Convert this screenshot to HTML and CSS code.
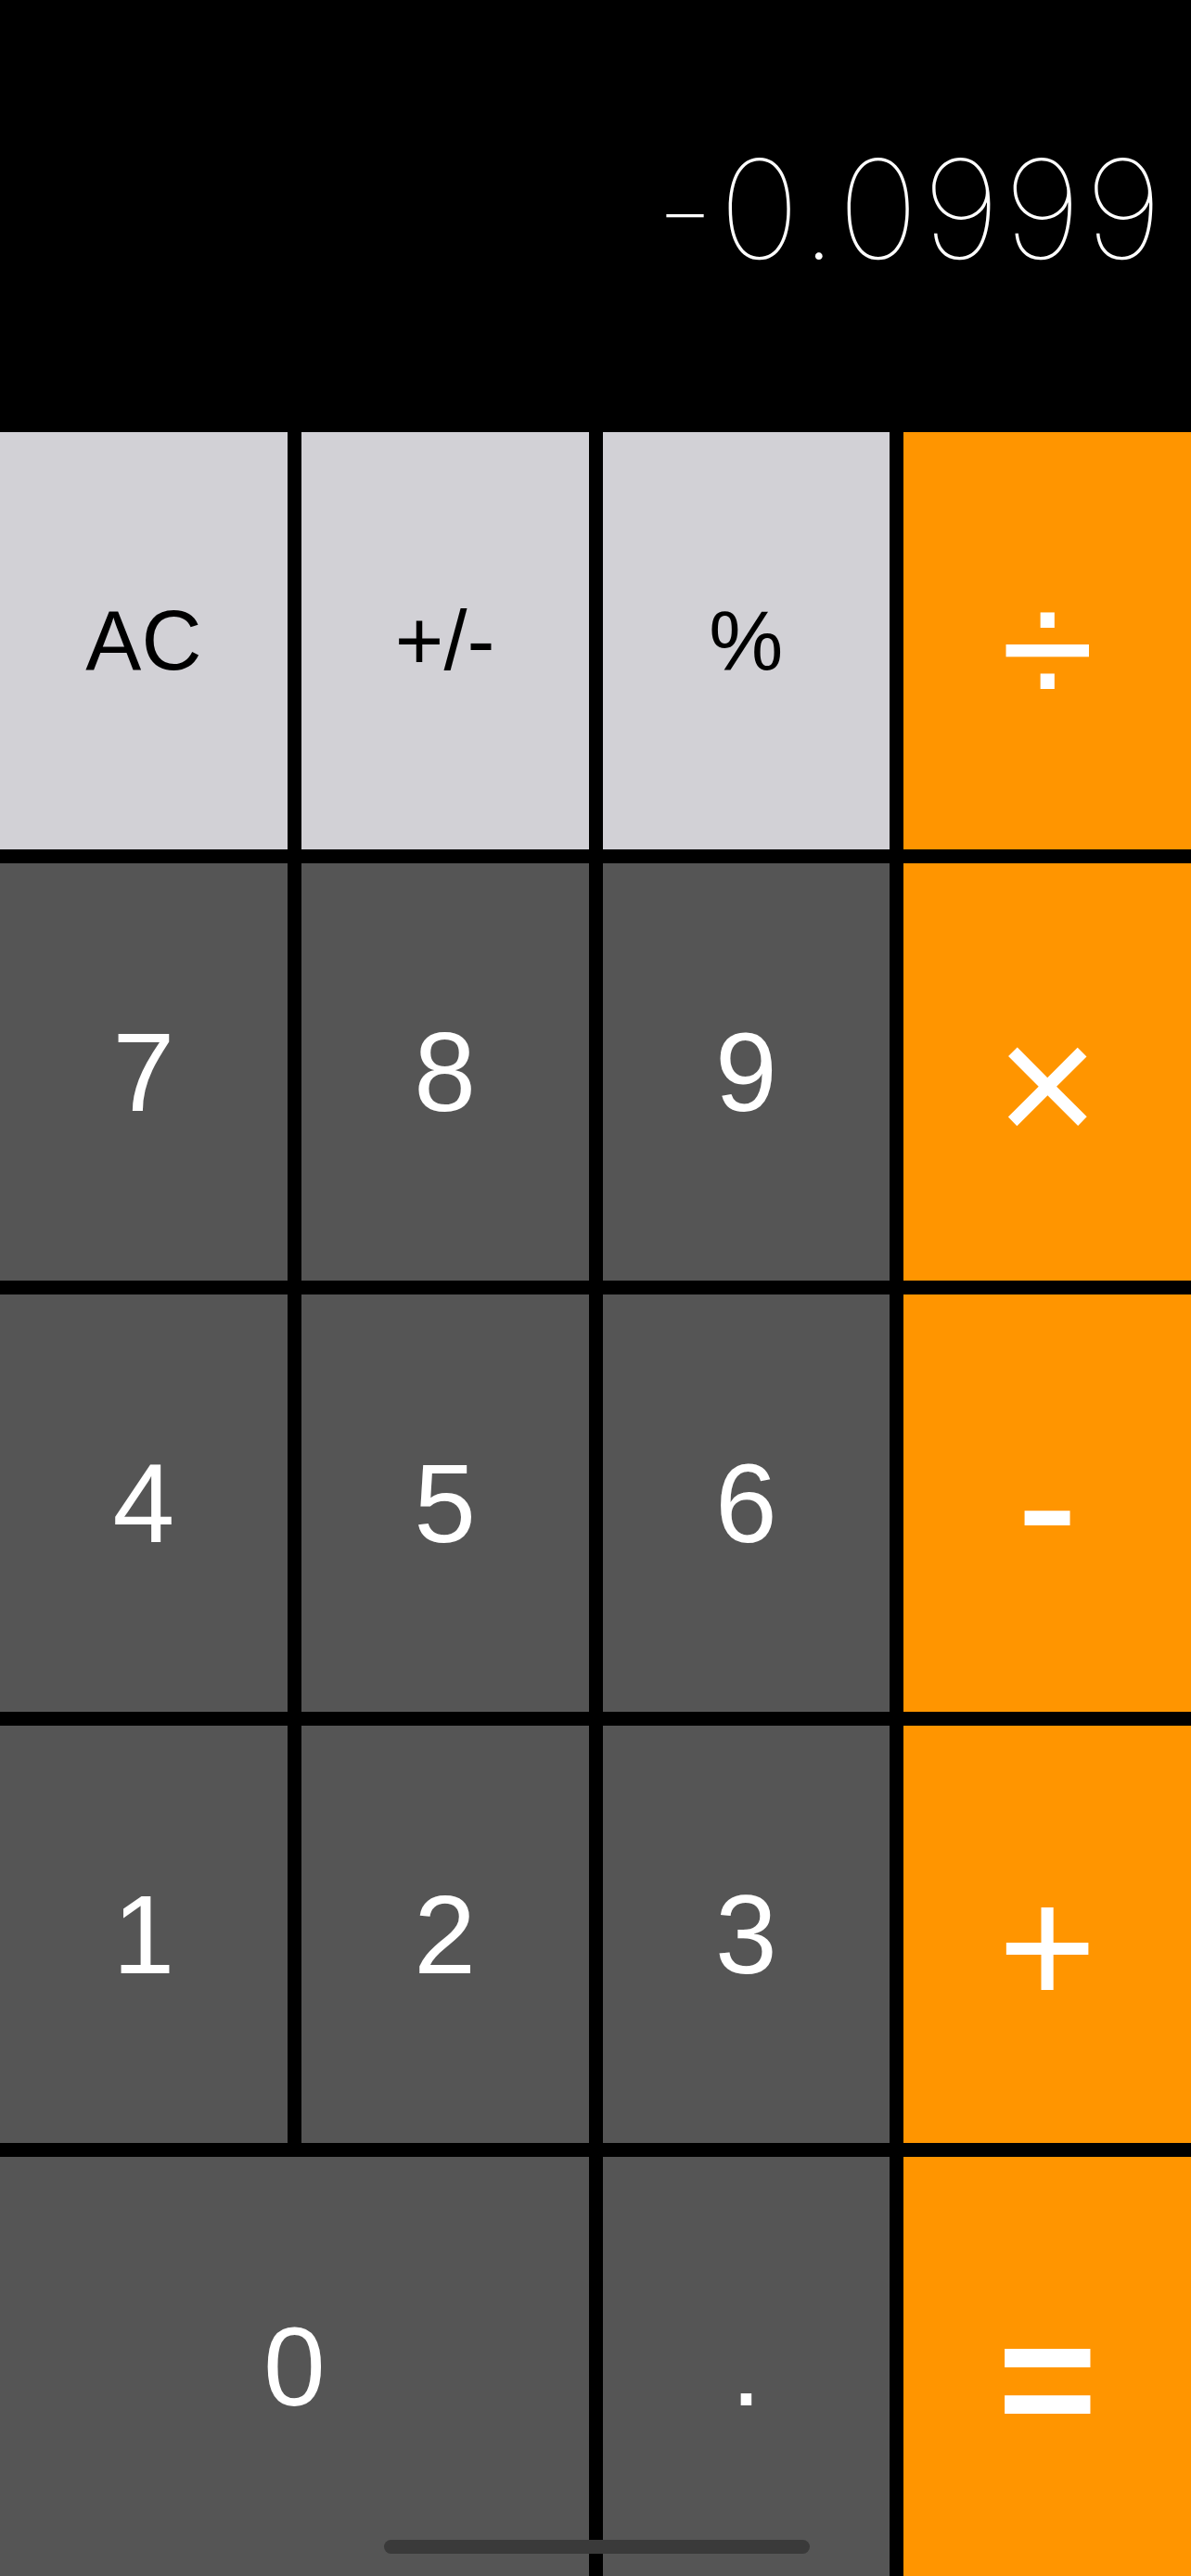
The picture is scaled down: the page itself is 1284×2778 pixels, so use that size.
FILE: index.html
```html
<!DOCTYPE html>
<html lang="en">
<head>
<meta charset="utf-8">
<title>Calculator</title>
<link rel="stylesheet" href="styles.css">
</head>
<body>
<div class="calc">
  <div class="display"><span class="value">-0.0999</span></div>
  <div class="keypad">
    <button class="key light">AC</button>
    <button class="key light">+/-</button>
    <button class="key light">%</button>
    <button class="key op op-div">÷</button>

    <button class="key dark">7</button>
    <button class="key dark">8</button>
    <button class="key dark">9</button>
    <button class="key op op-mul">×</button>

    <button class="key dark">4</button>
    <button class="key dark">5</button>
    <button class="key dark">6</button>
    <button class="key op op-sub">-</button>

    <button class="key dark">1</button>
    <button class="key dark">2</button>
    <button class="key dark">3</button>
    <button class="key op op-add">+</button>

    <button class="key dark zero">0</button>
    <button class="key dark dot">.</button>
    <button class="key op op-eq">=</button>
  </div>
  <div class="home-indicator"></div>
</div>
</body>
</html>
```

FILE: styles.css
```css
* {
  box-sizing: border-box;
}

html, body {
  margin: 0;
  padding: 0;
  background: #000;
}

.calc {
  position: relative;
  width: 1284px;
  height: 2778px;
  display: flex;
  flex-direction: column;
  background: #000;
  overflow: hidden;
}

.display {
  height: 466px;
  flex: none;
  display: flex;
  justify-content: flex-end;
  align-items: flex-start;
  padding: 152px 27px 0 0;
}

.value {
  font-family: "Inter", "Roboto", "Liberation Sans", sans-serif;
  font-weight: 100;
  font-size: 148px;
  line-height: 1;
  letter-spacing: 4px;
  color: #fff;
  white-space: nowrap;
}

.keypad {
  flex: 1;
  display: grid;
  grid-template-columns: repeat(4, 1fr);
  grid-template-rows: repeat(4, 450px) 1fr;
  gap: 15px;
}

.key {
  border: none;
  margin: 0;
  padding: 0;
  display: flex;
  align-items: center;
  justify-content: center;
  font-family: "Liberation Sans", Arial, sans-serif;
  font-weight: 400;
  line-height: 1;
  color: #fff;
}

.light {
  background: #d2d1d6;
  color: #000;
  font-size: 90px;
}

.dark {
  background: #555555;
  font-size: 120px;
}

.zero {
  grid-column: span 2;
}

.op {
  background: #ff9500;
  color: #fff;
  padding-top: 26px;
  font-size: 184px;
}

.op-div {
  padding-top: 16px;
}

.op-mul {
  font-size: 190px;
}

.op-sub {
  padding-top: 0;
  font-size: 200px;
}

.op-add {
  font-size: 182px;
}

.op-eq {
  font-size: 184px;
  font-weight: 700;
}

.home-indicator {
  position: absolute;
  left: 414px;
  bottom: 24px;
  width: 459px;
  height: 15px;
  border-radius: 8px;
  background: #3a3a3a;
}
```
